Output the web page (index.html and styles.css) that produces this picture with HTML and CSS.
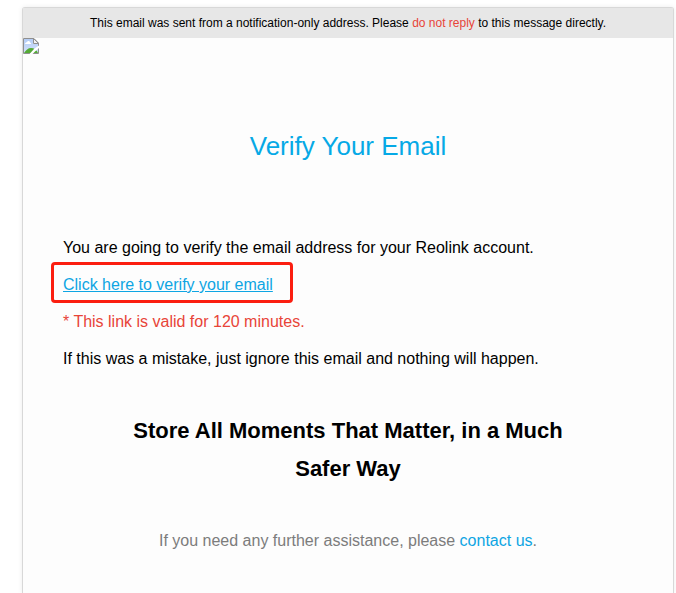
FILE: index.html
```html
<!DOCTYPE html>
<html lang="en">
<head>
<meta charset="utf-8">
<title>Verify Your Email</title>
<link rel="stylesheet" href="styles.css">
</head>
<body>
<main class="email">
  <p class="notice">This email was sent from a notification-only address. Please <span class="alert">do not reply</span> to this message directly.</p>
  <svg class="broken" viewBox="0 0 16 16" aria-hidden="true">
    <defs>
      <linearGradient id="sky" x1="0" y1="0" x2="0" y2="1">
        <stop offset="0" stop-color="#b4ccf5"/>
        <stop offset="1" stop-color="#d3e1fa"/>
      </linearGradient>
    </defs>
    <path d="M.5 .5H11L15.500 5V15.500H.5Z" fill="#fff" stroke="#8f8f8f"/>
    <path d="M1 1H10V6H15V15H1Z" fill="url(#sky)"/>
    <path d="M2 6C2 4.500 3.500 4.500 4 4C4.500 2.500 7 2.500 7 4.500C8 4.500 8 5.500 8 6Z" fill="#fff"/>
    <path d="M1 15C3 12 5 10 8 10C11 10 14 12 15 15Z" fill="#55aa36"/>
    <path d="M10.500 .5V5.500H15.500Z" fill="#f4f4f4" stroke="#8f8f8f"/>
    <path d="M16 7.500L13 9.500L11 11L6.500 16H9.500L12 13.500L16 10Z" fill="#fff"/>
  </svg>
  <h1 class="title">Verify Your Email</h1>
  <section class="message">
    <p>You are going to verify the email address for your Reolink account.</p>
    <p class="action"><a href="#verify">Click here to verify your email</a></p>
    <p class="alert">* This link is valid for 120 minutes.</p>
    <p>If this was a mistake, just ignore this email and nothing will happen.</p>
  </section>
  <h2 class="slogan">Store All Moments That Matter, in a Much Safer Way</h2>
  <p class="help">If you need any further assistance, please <a href="#contact">contact us</a>.</p>
</main>
</body>
</html>
```
FILE: styles.css
```css
* {
  box-sizing: border-box;
}

body {
  margin: 0;
  padding: 7px 2px 0 22px;
  background: #fff;
  color: #000;
  font-family: "Liberation Sans", Arial, sans-serif;
  font-size: 16px;
  line-height: 21px;
}

p, h1, h2 {
  margin: 0;
}

a {
  color: #0ea5e3;
}

.email {
  min-height: calc(100vh - 7px);
  padding-bottom: 42px;
  border: 1px solid #d8d8d8;
  border-bottom: 0;
  border-radius: 3px 3px 0 0;
  background: #fdfdfd;
  box-shadow: 0 0 5px rgba(0, 0, 0, 0.08);
}

.notice {
  background: #e7e7e7;
  font-size: 12px;
  line-height: 30px;
  text-align: center;
}

.alert {
  color: #e84438;
}

.broken {
  display: block;
  width: 16px;
  height: 16px;
}

.title {
  margin-top: 72px;
  color: #06a9e6;
  font-size: 26px;
  font-weight: 400;
  line-height: 40px;
  text-align: center;
}

.message {
  display: grid;
  gap: 16px;
  margin-top: 71px;
  padding: 0 40px;
}

.action {
  position: relative;
  justify-self: start;
}

.action::after {
  content: "";
  position: absolute;
  inset: -12px -20px -8px -12px;
  border: 3px solid #fb1e10;
  border-radius: 4px;
  pointer-events: none;
}

.slogan {
  margin-top: 43px;
  padding: 0 100px;
  font-size: 22px;
  line-height: 38px;
  text-align: center;
}

.help {
  margin-top: 42px;
  color: #7c7c7c;
  text-align: center;
}

.help a {
  text-decoration: none;
}
```
